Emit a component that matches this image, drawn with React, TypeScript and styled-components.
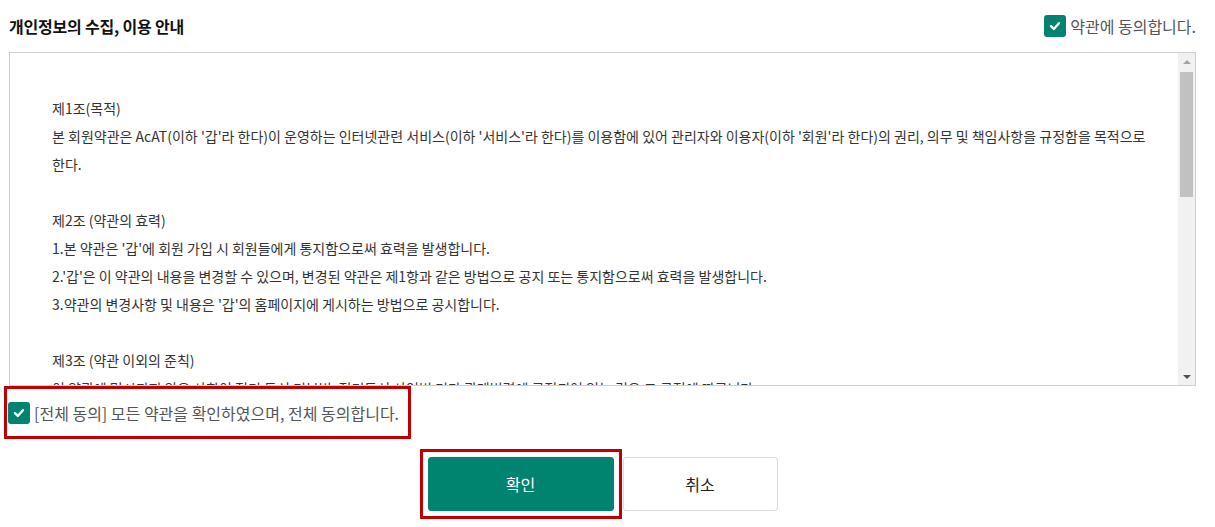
import React from "react";
import styled, { createGlobalStyle } from "styled-components";

const GlobalStyle = createGlobalStyle`
  html, body { margin: 0; padding: 0; background: #fff; }
  body { font-family: "Noto Sans CJK KR", "Noto Sans", sans-serif; }
  * { box-sizing: border-box; }
`;

const TEAL = "#00836f";
const RED = "#c00000";

const Page = styled.div`
  padding: 0 19px 16px 9px;
  min-height: 527px;
`;

const Header = styled.div`
  display: flex;
  align-items: center;
  justify-content: space-between;
  height: 52px;
`;

const Title = styled.h2`
  margin: 0;
  font-size: 16px;
  font-weight: 700;
  color: #111;
  letter-spacing: -0.2px;
`;

const CheckLabel = styled.label<{ $size: number; $highlight?: boolean }>`
  display: flex;
  align-items: center;
  gap: 4px;
  font-size: ${(p) => p.$size}px;
  color: #555;
  cursor: pointer;
  ${(p) =>
    p.$highlight &&
    `
    border: 3px solid ${RED};
    margin-left: -5px;
    width: 407px;
    height: 53px;
    padding-left: 1px;
  `}
`;

const Box = styled.span`
  width: 22px;
  height: 22px;
  border-radius: 3px;
  background: ${TEAL};
  display: inline-flex;
  align-items: center;
  justify-content: center;
  flex-shrink: 0;
`;

const CheckBox = () => (
  <Box>
    <svg width="14" height="14" viewBox="0 0 14 14">
      <polyline
        points="3,7.2 5.8,10 11,4.2"
        fill="none"
        stroke="#fff"
        strokeWidth="2.4"
        strokeLinecap="round"
        strokeLinejoin="round"
      />
    </svg>
  </Box>
);

const TermsBox = styled.div`
  border: 1px solid #cfcfcf;
  height: 334px;
  display: flex;
`;

const TermsText = styled.div`
  flex: 1;
  overflow: hidden;
  padding: 41px 20px 0 42px;
  font-size: 14px;
  line-height: 28px;
  color: #333;
  word-break: keep-all;
`;

const Para = styled.p`
  margin: 0;
`;

const Blank = styled.div`
  height: 28px;
`;

const ScrollBar = styled.div`
  width: 17px;
  background: #f1f1f1;
  display: flex;
  flex-direction: column;
`;

const ArrowButton = styled.div<{ $down?: boolean }>`
  height: 17px;
  display: flex;
  align-items: center;
  justify-content: center;
  &::before {
    content: "";
    width: 0;
    height: 0;
    border-left: 4px solid transparent;
    border-right: 4px solid transparent;
    ${(p) =>
      p.$down
        ? "border-top: 4px solid #505050;"
        : "border-bottom: 4px solid #a3a3a3;"}
  }
`;

const Track = styled.div`
  flex: 1;
  padding: 2px 2px 0;
`;

const Thumb = styled.div`
  height: 125px;
  background: #c1c1c1;
`;

const ButtonRow = styled.div`
  display: flex;
  justify-content: center;
  align-items: center;
  gap: 9px;
  margin-top: 18px;
`;

const Highlight = styled.div`
  display: flex;
  border: 3px solid ${RED};
  padding: 5px;
  margin: -8px;
`;

const Button = styled.button<{ $primary?: boolean }>`
  height: 54px;
  width: ${(p) => (p.$primary ? 186 : 155)}px;
  border-radius: 3px;
  font-family: inherit;
  font-size: 16px;
  cursor: pointer;
  background: ${(p) => (p.$primary ? TEAL : "#fff")};
  color: ${(p) => (p.$primary ? "#fff" : "#222")};
  border: 1px solid ${(p) => (p.$primary ? TEAL : "#dcdcdc")};
`;

export default function App() {
  return (
    <>
      <GlobalStyle />
      <Page>
        <Header>
          <Title>개인정보의 수집, 이용 안내</Title>
          <CheckLabel $size={16}>
            <CheckBox />
            약관에 동의합니다.
          </CheckLabel>
        </Header>
        <TermsBox>
          <TermsText>
            <Para>제1조(목적)</Para>
            <Para>
              본 회원약관은 AcAT(이하 '갑'라 한다)이 운영하는 인터넷관련 서비스(이하 '서비스'라 한다)를 이용함에 있어 관리자와 이용자(이하 '회원'라 한다)의 권리, 의무 및 책임사항을 규정함을 목적으로 한다.
            </Para>
            <Blank />
            <Para>제2조 (약관의 효력)</Para>
            <Para>1.본 약관은 '갑'에 회원 가입 시 회원들에게 통지함으로써 효력을 발생합니다.</Para>
            <Para>2.'갑'은 이 약관의 내용을 변경할 수 있으며, 변경된 약관은 제1항과 같은 방법으로 공지 또는 통지함으로써 효력을 발생합니다.</Para>
            <Para>3.약관의 변경사항 및 내용은 '갑'의 홈페이지에 게시하는 방법으로 공시합니다.</Para>
            <Blank />
            <Para>제3조 (약관 이외의 준칙)</Para>
            <Para>이 약관에 명시되지 않은 사항이 전기 통신 기본법, 전기통신 사업법 기타 관계법령에 규정되어 있는 경우 그 규정에 따릅니다.</Para>
          </TermsText>
          <ScrollBar>
            <ArrowButton />
            <Track>
              <Thumb />
            </Track>
            <ArrowButton $down />
          </ScrollBar>
        </TermsBox>
        <CheckLabel $size={16} $highlight>
          <CheckBox />
          [전체 동의] 모든 약관을 확인하였으며, 전체 동의합니다.
        </CheckLabel>
        <ButtonRow>
          <Highlight>
            <Button $primary>확인</Button>
          </Highlight>
          <Button>취소</Button>
        </ButtonRow>
      </Page>
    </>
  );
}
